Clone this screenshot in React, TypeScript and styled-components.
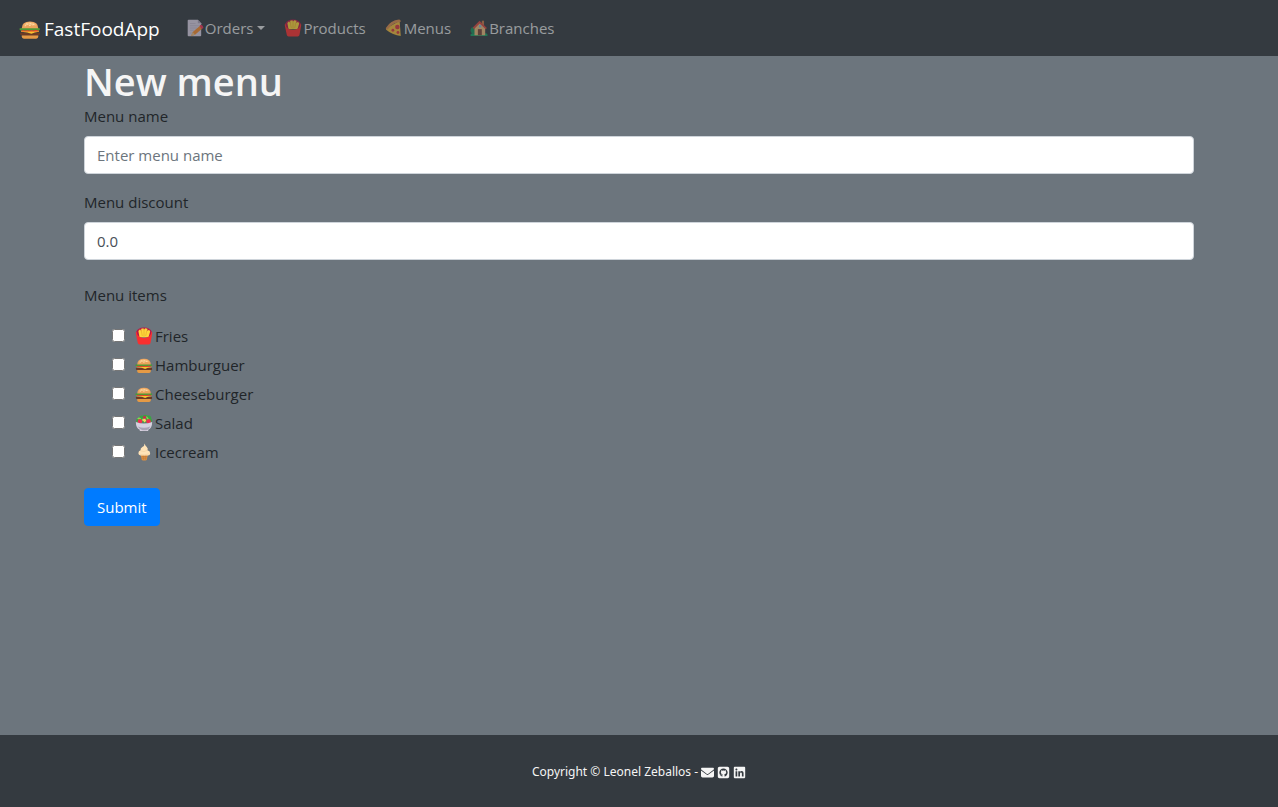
import React from "react";
import styled, { createGlobalStyle } from "styled-components";
import { FaEnvelope, FaLinkedin, FaSquareGithub } from "react-icons/fa6";

const GlobalStyle = createGlobalStyle`
  *, *::before, *::after { box-sizing: border-box; }
  body {
    margin: 0;
    background: #6c757d;
    color: #212529;
    font-family: "Segoe UI", "Open Sans", "Noto Sans", sans-serif;
    font-size: 15px;
    line-height: 24px;
  }
`;

const Page = styled.div`
  display: flex;
  flex-direction: column;
  min-height: 100vh;
`;

const Navbar = styled.nav`
  display: flex;
  align-items: center;
  min-height: 56px;
  padding: 0 19px;
  background: #343a40;
`;

const Brand = styled.a`
  display: flex;
  align-items: center;
  gap: 3px;
  margin-right: 18px;
  padding-top: 2px;
  color: #fff;
  font-size: 19px;
  line-height: 30px;
  text-decoration: none;
`;

const NavList = styled.ul`
  display: flex;
  gap: 3px;
  margin: 0;
  padding: 0;
  list-style: none;
`;

const NavLink = styled.a`
  display: flex;
  align-items: center;
  gap: 1px;
  padding: 8px;
  color: rgba(255, 255, 255, 0.5);
  text-decoration: none;

  svg { opacity: 0.6; }
`;

const Caret = styled.span`
  margin-left: 3px;
  border-top: 4px solid;
  border-right: 4px solid transparent;
  border-left: 4px solid transparent;
`;

const Main = styled.main`
  width: 100%;
  max-width: 1140px;
  margin: 0 auto;
  padding: 0 15px 24px;
`;

const Title = styled.h1`
  margin: 0;
  padding-top: 2px;
  color: #f5f5f5;
  font-size: 38px;
  font-weight: 600;
  line-height: 46px;
`;

const Field = styled.div`
  display: flex;
  flex-direction: column;
  gap: 8px;
  margin-bottom: 16px;
`;

const TextInput = styled.input`
  width: 100%;
  height: 38px;
  padding: 6px 12px;
  border: 1px solid #ced4da;
  border-radius: 4px;
  background: #fff;
  color: #495057;
  font: inherit;

  &::placeholder { color: #6c757d; opacity: 1; }
`;

const Items = styled.fieldset`
  margin: 23px 0 24px;
  padding: 0;
  border: 0;
`;

const Legend = styled.legend`
  margin-bottom: 17px;
  padding: 0;
`;

const ItemList = styled.ul`
  display: flex;
  flex-direction: column;
  gap: 5px;
  margin: 0;
  padding: 0 0 0 28px;
  list-style: none;
`;

const ItemLabel = styled.label`
  display: flex;
  align-items: center;
  width: fit-content;
`;

const Checkbox = styled.input`
  width: 13px;
  height: 13px;
  margin: 0 10px 2px 0;
`;

const ItemName = styled.span`
  margin-left: 2px;
`;

const SubmitButton = styled.button`
  height: 38px;
  padding: 6px 12px;
  border: 1px solid #007bff;
  border-radius: 4px;
  background: #007bff;
  color: #fff;
  font: inherit;
`;

const Footer = styled.footer`
  display: flex;
  align-items: center;
  justify-content: center;
  gap: 3px;
  margin-top: auto;
  padding: 25px 16px 23px;
  background: #343a40;
  color: #f5f5f5;
  font-family: "Segoe UI", "Noto Sans", sans-serif;
  font-size: 12px;
`;

const FooterLink = styled.a`
  display: flex;
  color: inherit;
`;

type EmojiProps = { size?: number };

const Drawing = ({ size = 18, children }: EmojiProps & { children: React.ReactNode }) => (
  <svg width={size} height={size} viewBox="0 0 32 32" aria-hidden="true">{children}</svg>
);

const Burger = ({ size }: EmojiProps) => (
  <Drawing size={size}>
    <path d="M4 25h24v2q0 3-3 3H7q-3 0-3-3z" fill="#e59a45" />
    <path d="M3 21h26q1.500 0 1.500 2T29 25H3q-1.500 0-1.500-2T3 21z" fill="#6d3b24" />
    <path d="M3 18h26v2l-6 1-5 2-6-2-9-1z" fill="#fcc52c" />
    <path d="M4 16.500h24q2 1.500 0 3H4q-2-1.500 0-3z" fill="#e5432d" />
    <path d="M2 15q14-3 28 0 1.500 2-1 3-3 0-5-1-3 2-6 .500-3 1.500-6 0-3 1.500-6 0-2 1-4 .500-2-1-1-3z" fill="#4c9a35" />
    <path d="M4 15Q4 5 16 5t12 10z" fill="#eba35c" />
    <path d="M7 11Q9 6 16 6t9 5q-9-2-18 0z" fill="#f5be7d" />
    <path d="M11 8.500l1.500.500M16 8l1.500.500M20 10l1.500-.500M15 11h1.500M9 11.500l1-.500" stroke="#ffe4b1" strokeWidth="1.200" strokeLinecap="round" />
  </Drawing>
);

const Fries = () => (
  <Drawing>
    <path d="M2 9Q5 1 16 1t14 8l-3 7H5z" fill="#b81447" />
    <path d="M6 7l3-3 2 3V3l4-1 1 3 2-3 4 1v4l3-2 2 3-3 10H8z" fill="#fcd63b" />
    <path d="M11 6l2 10M16 5v12M21 6l-2 10" stroke="#e8a323" strokeWidth="1" fill="none" />
    <path d="M2.500 8q1 7 5.500 9.500 8 4 16 0Q28.500 15 29.500 8q1.500 1 1 4l-3 16.500q-.500 2.500-3 2.500H8q-2.500 0-3-2.500L1.500 12q-.500-3 1-4z" fill="#f92f2f" />
  </Drawing>
);

const Salad = () => (
  <Drawing>
    <path d="M3 15Q0 8 7 7q1-5 7-4 4-3 8 0 7-1 7 5 3 3 0 7z" fill="#37a641" />
    <path d="M5 9q2-3 5 0M20 5l4 5M12 12l4-4" stroke="#86d94e" strokeWidth="2.500" fill="none" />
    <circle cx="17" cy="6" r="3" fill="#c62b54" />
    <circle cx="9" cy="13" r="4" fill="#f02c50" />
    <circle cx="24" cy="13" r="4" fill="#f02c50" />
    <path d="M13 10l5-2 2 4-3 3z" fill="#f6d55b" />
    <path d="M1.500 14q14.500 6 29 0 0 11-7 14v2H8.500v-2q-7-3-7-14z" fill="#d6d0df" />
    <path d="M5 22q11 5 22 0-3 7-10 7T5 22z" fill="#a9a1b5" />
  </Drawing>
);

const IceCream = () => (
  <Drawing>
    <path d="M10 20h13l-2 10q-4.500 2-9 0z" fill="#d99045" />
    <path d="M12 24h9M12 27h8M15 21v9M19 21v9" stroke="#c67a35" strokeWidth="1" />
    <path d="M17 1q1 4 4 6 3 3 1 6 5 1 5 5t-4 4H10q-4-1-4-4 0-4 4-5-1-4 3-6 4-1 4-6z" fill="#ffe3b8" />
    <path d="M10 14q6 3 12-1M8 20q9 3 17-1" stroke="#f3cd9b" strokeWidth="1" fill="none" />
  </Drawing>
);

const Memo = () => (
  <Drawing>
    <path d="M3 3q0-1.500 1.500-1.500H21l6 6V29q0 1.500-1.500 1.500h-21Q3 30.500 3 29z" fill="#d8cfe2" />
    <path d="M21 1.500l6 6h-6z" fill="#aaa0b8" />
    <path d="M7 8h10M7 12h16M7 16h13M7 20h7M7 25h5" stroke="#b5abc1" strokeWidth="1" />
    <path d="M12 23l13-11 4 5-13 11-7 2z" fill="#f68b2d" />
    <path d="M24 12l2-2q4 0 5 5l-3 3z" fill="#ee3158" />
    <path d="M12 23l4 5-7 2z" fill="#e9bd83" />
  </Drawing>
);

const Pizza = () => (
  <Drawing>
    <path d="M2 17L26 3l2 27q-14-1-26-11z" fill="#efb93b" />
    <path d="M1.500 16Q10 2 25 1q3 0 3 4-13 1-23 13-4 2-3.500-2z" fill="#d98a4b" />
    <circle cx="22" cy="14" r="4" fill="#d9363d" />
    <circle cx="14" cy="20" r="2.500" fill="#d9363d" />
    <circle cx="23" cy="24" r="2.500" fill="#d9363d" />
  </Drawing>
);

const House = () => (
  <Drawing>
    <circle cx="7" cy="20" r="6" fill="#158e59" />
    <path d="M1 27q3-3 8-1h14q6-2 8 1v3H1z" fill="#15a164" />
    <path d="M21 3h4v8h-4z" fill="#c27848" />
    <path d="M8 15l10-9 9 9v14H8z" fill="#e9b87a" />
    <path d="M5 15L17 3l13 13-2 2L17 8 7 18z" fill="#d5483f" />
    <path d="M14 18h7v11h-7z" fill="#7b4638" />
    <path d="M16 11h4v4h-4z" fill="#75b7dd" />
  </Drawing>
);

const navLinks = [
  { text: "Orders", icon: <Memo />, menu: true },
  { text: "Products", icon: <Fries /> },
  { text: "Menus", icon: <Pizza /> },
  { text: "Branches", icon: <House /> },
];

const menuItems = [
  { text: "Fries", icon: <Fries /> },
  { text: "Hamburguer", icon: <Burger /> },
  { text: "Cheeseburger", icon: <Burger /> },
  { text: "Salad", icon: <Salad /> },
  { text: "Icecream", icon: <IceCream /> },
];

export default function App() {
  return (
    <Page>
      <GlobalStyle />
      <Navbar>
        <Brand href="#">
          <Burger size={22} />
          FastFoodApp
        </Brand>
        <NavList>
          {navLinks.map(({ text, icon, menu }) => (
            <li key={text}>
              <NavLink href="#">
                {icon}
                {text}
                {menu && <Caret />}
              </NavLink>
            </li>
          ))}
        </NavList>
      </Navbar>
      <Main>
        <Title>New menu</Title>
        <form onSubmit={(event) => event.preventDefault()}>
          <Field>
            <label htmlFor="name">Menu name</label>
            <TextInput id="name" type="text" placeholder="Enter menu name" />
          </Field>
          <Field>
            <label htmlFor="discount">Menu discount</label>
            <TextInput id="discount" type="text" inputMode="decimal" defaultValue="0.0" />
          </Field>
          <Items>
            <Legend>Menu items</Legend>
            <ItemList>
              {menuItems.map(({ text, icon }) => (
                <li key={text}>
                  <ItemLabel>
                    <Checkbox type="checkbox" name="items" value={text} />
                    {icon}
                    <ItemName>{text}</ItemName>
                  </ItemLabel>
                </li>
              ))}
            </ItemList>
          </Items>
          <SubmitButton type="submit">Submit</SubmitButton>
        </form>
      </Main>
      <Footer>
        <span>Copyright © Leonel Zeballos -</span>
        <FooterLink href="#" aria-label="Email"><FaEnvelope size={13} /></FooterLink>
        <FooterLink href="#" aria-label="GitHub"><FaSquareGithub size={13} /></FooterLink>
        <FooterLink href="#" aria-label="LinkedIn"><FaLinkedin size={13} /></FooterLink>
      </Footer>
    </Page>
  );
}
